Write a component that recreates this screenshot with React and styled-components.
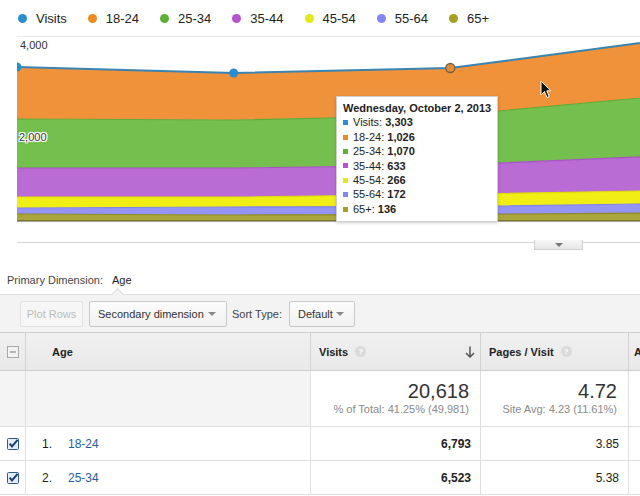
import React from "react";
import styled, { createGlobalStyle } from "styled-components";

const GlobalStyle = createGlobalStyle`
  html, body { margin: 0; padding: 0; background: #fff; }
  body { font-family: "Liberation Sans", Arial, sans-serif; color: #333; }
`;

const legend = [
  { label: "Visits", color: "#2a8fd0" },
  { label: "18-24", color: "#ee8a24" },
  { label: "25-34", color: "#5bb236" },
  { label: "35-44", color: "#b552d0" },
  { label: "45-54", color: "#e6e61c" },
  { label: "55-64", color: "#8484f2" },
  { label: "65+", color: "#a5a021" },
];

// bottom to top
const series = [
  { name: "65+", fill: "#aaa63c", line: "#8f8a22", vals: [151, 130, 136, 177] },
  { name: "55-64", fill: "#9494f5", line: "#8080ee", vals: [130, 173, 172, 199] },
  { name: "45-54", fill: "#f0ee14", line: "#dedc00", vals: [237, 216, 266, 283] },
  { name: "35-44", fill: "#b96cd3", line: "#a852c4", vals: [626, 626, 633, 749] },
  { name: "25-34", fill: "#75bf4f", line: "#5fab3a", vals: [1058, 1036, 1070, 1302] },
  { name: "18-24", fill: "#ef9239", line: "#e88424", vals: [1123, 1014, 1026, 1209] },
];

const tip = [
  { label: "Visits", value: "3,303", color: "#2a8fd0" },
  { label: "18-24", value: "1,026", color: "#ee8a24" },
  { label: "25-34", value: "1,070", color: "#5bb236" },
  { label: "35-44", value: "633", color: "#b552d0" },
  { label: "45-54", value: "266", color: "#e6e61c" },
  { label: "55-64", value: "172", color: "#8484f2" },
  { label: "65+", value: "136", color: "#a5a021" },
];

const rows = [
  { rank: "1.", age: "18-24", visits: "6,793", pages: "3.85" },
  { rank: "2.", age: "25-34", visits: "6,523", pages: "5.38" },
];

const K = 0.04632;
const BASE = 184;
const xs = [0, 216.67, 433.33, 650];
const yOf = (v) => BASE - v * K;

function buildChart() {
  let cum = [0, 0, 0, 0];
  const bands = series.map((s) => {
    const bottom = cum.slice();
    const top = cum.map((c, i) => c + s.vals[i]);
    cum = top;
    const topPts = xs.map((x, i) => `${x},${yOf(top[i]).toFixed(1)}`);
    const botPts = xs.map((x, i) => `${x},${yOf(bottom[i]).toFixed(1)}`).reverse();
    return { ...s, area: [...topPts, ...botPts].join(" "), edge: topPts.join(" ") };
  });
  const visits = xs.map((x, i) => [x, yOf(cum[i])]);
  return { bands, visits };
}

export default function App() {
  const { bands, visits } = buildChart();
  return (
    <Page>
      <GlobalStyle />
      <Legend>
        {legend.map((l) => (
          <LegendItem key={l.label}>
            <Dot color={l.color} />
            {l.label}
          </LegendItem>
        ))}
      </Legend>

      <Chart>
        <svg width="623" height="205" style={{ display: "block" }}>
          {bands.map((b) => (
            <polygon key={b.name} points={b.area} fill={b.fill} />
          ))}
          {bands.slice(0, 5).map((b) => (
            <polyline key={b.name} points={b.edge} fill="none" stroke={b.line} strokeWidth="1.2" />
          ))}
          <line x1="0" y1={BASE} x2="623" y2={BASE} stroke="#4d4a2a" strokeWidth="1" />
          <polyline
            points={visits.map((p) => p.join(",")).join(" ")}
            fill="none"
            stroke="#3a84b2"
            strokeWidth="2"
          />
          <circle cx={visits[0][0]} cy={visits[0][1]} r="4.5" fill="#2a8bd0" />
          <circle cx={visits[1][0]} cy={visits[1][1]} r="4.5" fill="#2a8bd0" />
          <circle cx={visits[2][0]} cy={visits[2][1]} r="4.5" fill="#e38c3a" stroke="#6d6250" strokeWidth="1.3" />
        </svg>
        <AxisLabel top={2} left={3}>4,000</AxisLabel>
        <AxisLabel top={94} left={2} halo>2,000</AxisLabel>
        <Tooltip>
          <TipTitle>Wednesday, October 2, 2013</TipTitle>
          {tip.map((t) => (
            <TipRow key={t.label}>
              <Swatch color={t.color} />
              {t.label}:&nbsp;<b>{t.value}</b>
            </TipRow>
          ))}
        </Tooltip>
        <Cursor width="12" height="19" viewBox="0 0 12 19">
          <path d="M1 1 L1 15 L4.5 11.5 L7 17.5 L9.2 16.5 L6.8 10.8 L11 10.8 Z" fill="#111" stroke="#fff" strokeWidth="1" />
        </Cursor>
        <ChartToggle>
          <Caret />
        </ChartToggle>
      </Chart>

      <PrimaryRow>
        Primary Dimension:<PrimaryValue>Age</PrimaryValue>
      </PrimaryRow>

      <Toolbar>
        <PlotButton>Plot Rows</PlotButton>
        <SelectButton width={138}>
          Secondary dimension
          <Caret light />
        </SelectButton>
        <ToolLabel>Sort Type:</ToolLabel>
        <SelectButton width={66}>
          Default
          <Caret light />
        </SelectButton>
      </Toolbar>

      <Table>
        <HeadCell>
          <svg width="12" height="12" viewBox="0 0 12 12">
            <rect x="0.5" y="0.5" width="11" height="11" fill="#f2f2f2" stroke="#a9a9a9" />
            <line x1="3" y1="6" x2="9" y2="6" stroke="#8f8f8f" strokeWidth="1.3" />
          </svg>
        </HeadCell>
        <HeadCell pad={26}>Age</HeadCell>
        <HeadCell pad={8}>
          Visits <Help>?</Help>
          <SortArrow width="10" height="12" viewBox="0 0 10 12">
            <path d="M5 0.5 V11 M1 7 L5 11 L9 7" fill="none" stroke="#555" strokeWidth="1.5" />
          </SortArrow>
        </HeadCell>
        <HeadCell pad={8}>
          Pages / Visit <Help>?</Help>
        </HeadCell>
        <HeadCell pad={5} last>
          A
        </HeadCell>

        <TotalCell gray />
        <TotalCell gray />
        <TotalCell>
          <Big>20,618</Big>
          <Sub>% of Total: 41.25% (49,981)</Sub>
        </TotalCell>
        <TotalCell>
          <Big>4.72</Big>
          <Sub>Site Avg: 4.23 (11.61%)</Sub>
        </TotalCell>
        <TotalCell last />

        {rows.map((r) => (
          <React.Fragment key={r.rank}>
            <Cell center>
              <svg width="12" height="12" viewBox="0 0 12 12">
                <rect x="0.5" y="0.5" width="11" height="11" rx="1" fill="#e3ecf7" stroke="#2f5a8e" />
                <path d="M2.6 5.6 L5 8.4 L10.6 1.8" fill="none" stroke="#1c3f78" strokeWidth="2" />
              </svg>
            </Cell>
            <Cell pad={16}>
              <Rank>{r.rank}</Rank>
              <AgeLink>{r.age}</AgeLink>
            </Cell>
            <Cell right bold>{r.visits}</Cell>
            <Cell right>{r.pages}</Cell>
            <Cell last />
          </React.Fragment>
        ))}
      </Table>
    </Page>
  );
}

const Page = styled.div`
  width: 640px;
  height: 496px;
  overflow: hidden;
  background: #fff;
`;

const Legend = styled.div`
  display: flex;
  align-items: center;
  gap: 21px;
  height: 36px;
  padding-left: 18px;
  font-size: 13px;
  color: #222;
`;

const LegendItem = styled.div`
  display: flex;
  align-items: center;
  gap: 9px;
  white-space: nowrap;
`;

const Dot = styled.span`
  width: 9px;
  height: 9px;
  border-radius: 50%;
  background: ${(p) => p.color};
`;

const Chart = styled.div`
  position: relative;
  margin-left: 17px;
  width: 623px;
  height: 205px;
  border-top: 1px solid #e8e8e8;
  border-bottom: 1px solid #d6d6d6;
`;

const AxisLabel = styled.div`
  position: absolute;
  top: ${(p) => p.top}px;
  left: ${(p) => p.left}px;
  font-size: 11px;
  line-height: 13px;
  color: #333;
  text-shadow: ${(p) =>
    p.halo
      ? "1px 0 0 #fff, -1px 0 0 #fff, 0 1px 0 #fff, 0 -1px 0 #fff, 1px 1px 0 #fff, -1px -1px 0 #fff, 1px -1px 0 #fff, -1px 1px 0 #fff"
      : "none"};
`;

const Tooltip = styled.div`
  position: absolute;
  top: 59px;
  left: 319px;
  width: 162px;
  height: 126px;
  box-sizing: border-box;
  padding: 4px 0 0 6px;
  background: #fff;
  border: 1px solid #cfcfcf;
  box-shadow: 0 1px 3px rgba(0, 0, 0, 0.2);
  font-size: 11px;
  line-height: 14.4px;
  color: #222;
`;

const TipTitle = styled.div`
  font-weight: bold;
  white-space: nowrap;
`;

const TipRow = styled.div`
  display: flex;
  align-items: center;
  white-space: nowrap;
`;

const Swatch = styled.span`
  width: 5px;
  height: 5px;
  margin-right: 5px;
  background: ${(p) => p.color};
`;

const Cursor = styled.svg`
  position: absolute;
  top: 43px;
  left: 523px;
`;

const ChartToggle = styled.div`
  position: absolute;
  top: 203px;
  left: 517px;
  width: 49px;
  height: 10px;
  box-sizing: border-box;
  display: flex;
  align-items: center;
  justify-content: center;
  background: linear-gradient(#f7f7f7, #e6e6e6);
  border: 1px solid #d0d0d0;
  border-top: none;
`;

const Caret = styled.span`
  width: 0;
  height: 0;
  border-left: 4px solid transparent;
  border-right: 4px solid transparent;
  border-top: 4px solid ${(p) => (p.light ? "#888" : "#777")};
`;

const PrimaryRow = styled.div`
  display: flex;
  align-items: flex-end;
  height: 51px;
  padding: 0 0 7px 7px;
  box-sizing: border-box;
  font-size: 11px;
  line-height: 14px;
  color: #444;
`;

const PrimaryValue = styled.span`
  margin-left: 9px;
  color: #222;
`;

const Toolbar = styled.div`
  position: relative;
  display: flex;
  align-items: center;
  height: 37px;
  padding-left: 20px;
  background: #f3f3f3;
  border-top: 1px solid #dcdcdc;
  font-size: 11px;
  &::before {
    content: "";
    position: absolute;
    top: -5px;
    left: 113px;
    width: 8px;
    height: 8px;
    background: #f3f3f3;
    border-top: 1px solid #dcdcdc;
    border-left: 1px solid #dcdcdc;
    transform: rotate(45deg);
  }
`;

const PlotButton = styled.div`
  width: 63px;
  height: 26px;
  box-sizing: border-box;
  display: flex;
  align-items: center;
  justify-content: center;
  background: #f6f6f6;
  border: 1px solid #e2e2e2;
  border-radius: 2px;
  color: #bdbdbd;
  margin-right: 6px;
`;

const SelectButton = styled.div`
  width: ${(p) => p.width}px;
  height: 26px;
  box-sizing: border-box;
  display: flex;
  align-items: center;
  justify-content: space-between;
  padding: 0 10px 0 8px;
  background: linear-gradient(#fdfdfd, #f1f1f1);
  border: 1px solid #c8c8c8;
  border-radius: 2px;
  color: #333;
`;

const ToolLabel = styled.span`
  margin: 0 7px 0 5px;
  color: #444;
`;

const Table = styled.div`
  display: grid;
  grid-template-columns: 26px 285px 170px 148px 200px;
  grid-template-rows: 38px 56px 34px 34px;
  border-top: 1px solid #cfcfcf;
`;

const HeadCell = styled.div`
  display: flex;
  align-items: center;
  justify-content: ${(p) => (p.pad ? "flex-start" : "center")};
  padding-left: ${(p) => p.pad || 0}px;
  background: linear-gradient(#f0f0f0, #e9e9e9);
  border-right: ${(p) => (p.last ? "none" : "1px solid #d2d2d2")};
  border-bottom: 1px solid #cdcdcd;
  font-size: 11px;
  font-weight: bold;
  color: #222;
  white-space: nowrap;
`;

const Help = styled.span`
  display: inline-flex;
  align-items: center;
  justify-content: center;
  width: 11px;
  height: 11px;
  margin-left: 7px;
  border-radius: 50%;
  background: #dadada;
  color: #fff;
  font-size: 8px;
  font-weight: bold;
`;

const SortArrow = styled.svg`
  margin-left: auto;
  margin-right: 5px;
`;

const TotalCell = styled.div`
  display: flex;
  flex-direction: column;
  align-items: flex-end;
  justify-content: center;
  padding: 0 11px 2px 0;
  background: ${(p) => (p.gray ? "#f4f4f4" : "#fff")};
  border-right: ${(p) => (p.last ? "none" : "1px solid #dedede")};
  border-bottom: 1px solid #dedede;
  white-space: nowrap;
`;

const Big = styled.div`
  font-size: 20px;
  line-height: 22px;
  color: #333;
`;

const Sub = styled.div`
  font-size: 11px;
  line-height: 14px;
  color: #8a8a8a;
`;

const Cell = styled.div`
  display: flex;
  align-items: center;
  justify-content: ${(p) => (p.right ? "flex-end" : p.center ? "center" : "flex-start")};
  padding-left: ${(p) => p.pad || 0}px;
  padding-right: ${(p) => (p.right ? 9 : 0)}px;
  border-right: ${(p) => (p.last ? "none" : "1px solid #dedede")};
  border-bottom: 1px solid #dedede;
  font-size: 12px;
  font-weight: ${(p) => (p.bold ? "bold" : "normal")};
  color: #222;
  white-space: nowrap;
`;

const Rank = styled.span`
  width: 26px;
`;

const AgeLink = styled.a`
  color: #1f5c9e;
  text-decoration: none;
`;
